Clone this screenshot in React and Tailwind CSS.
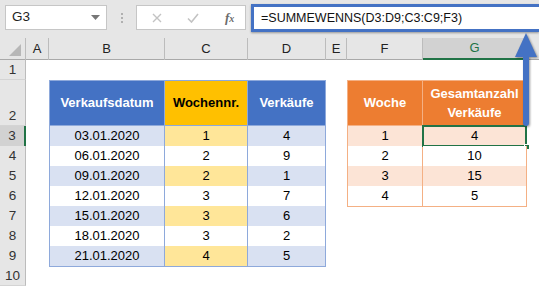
import React from "react";

const GRID = "grid grid-cols-[26px_23px_116px_83px_78px_21px_76px_104px_12px]";
const FONT = "font-['Liberation_Sans',Arial,sans-serif]";

const dates = ["03.01.2020", "06.01.2020", "09.01.2020", "12.01.2020", "15.01.2020", "18.01.2020", "21.01.2020"];
const weeks = [1, 2, 2, 3, 3, 3, 4];
const sales = [4, 9, 1, 7, 6, 2, 5];
const totals = [
  [1, 4],
  [2, 10],
  [3, 15],
  [4, 5],
];

function RowHead({ n, active }) {
  return (
    <div
      className={`flex items-end justify-center border-b border-[#d4d4d4] pb-[1px] text-[13.5px] leading-none text-[#333] ${
        active ? "border-r-2 border-r-[#217346] bg-[#d2d2d2]" : "border-r border-r-[#bcbcbc] bg-[#e6e6e6]"
      }`}
    >
      <span className="mb-[2px]">{n}</span>
    </div>
  );
}

function Cell({ className = "", children }) {
  return <div className={`flex items-center justify-center text-[13px] text-black ${className}`}>{children}</div>;
}

function FormulaBar() {
  return (
    <div className="flex h-[38px] items-start bg-[#e6e6e6] pl-[5px] pt-[5px]">
      <div className="flex h-[25px] w-[102px] items-center justify-between border border-[#c6c6c6] bg-white pl-[6px] pr-[6px]">
        <span className="text-[13.5px] text-[#222]">G3</span>
        <svg width="9" height="5" viewBox="0 0 9 5">
          <path d="M0 0h9L4.5 5z" fill="#777" />
        </svg>
      </div>
      <div className="ml-[14px] mt-[8px] flex flex-col gap-[2px]">
        <span className="h-[2px] w-[2px] bg-[#b0b0b0]" />
        <span className="h-[2px] w-[2px] bg-[#b0b0b0]" />
        <span className="h-[2px] w-[2px] bg-[#b0b0b0]" />
      </div>
      <div className="ml-[13px] flex h-[25px] w-[110px] items-center border border-[#c6c6c6] bg-white">
        <svg className="ml-[15px]" width="10" height="10" viewBox="0 0 10 10">
          <path d="M1 1l8 8M9 1l-8 8" stroke="#c3c3c3" strokeWidth="1.4" />
        </svg>
        <svg className="ml-[25px]" width="12" height="10" viewBox="0 0 12 10">
          <path d="M1 5.5l3.5 3.5L11 1" stroke="#c3c3c3" strokeWidth="1.6" fill="none" />
        </svg>
        <span className="ml-[26px] font-['Liberation_Serif',serif] text-[13px] font-bold italic text-[#6b6b6b]">
          f<span className="text-[10px]">x</span>
        </span>
      </div>
      <div className="ml-[5px] mt-[-1px] flex h-[28px] flex-1 items-center border-[3px] border-r-0 border-[#4472c4] bg-white pl-[7px] shadow-[0_1px_2px_rgba(0,0,0,0.35)]">
        <span className="text-[12.5px] text-[#111]">=SUMMEWENNS(D3:D9;C3:C9;F3)</span>
      </div>
    </div>
  );
}

function ColumnHeaders() {
  const cols = ["A", "B", "C", "D", "E", "F", "G"];
  return (
    <div className={`${GRID} h-[22px] border-b border-[#a9a9a9] bg-[#e6e6e6]`}>
      <div className="flex items-end justify-end border-r border-[#bcbcbc] pb-[4px] pr-[4px]">
        <svg width="12" height="12" viewBox="0 0 12 12">
          <path d="M12 0v12H0z" fill="#b7b7b7" />
        </svg>
      </div>
      {cols.map((c) => (
        <div
          key={c}
          className={`flex items-center justify-center border-r border-[#bcbcbc] text-[13px] ${
            c === "G" ? "border-b-2 border-b-[#217346] bg-[#d2d2d2] text-[#217346]" : "text-[#222]"
          }`}
        >
          {c}
        </div>
      ))}
      <div />
    </div>
  );
}

export default function App() {
  return (
    <div className={`relative h-[286px] w-[539px] overflow-hidden bg-white ${FONT}`}>
      <FormulaBar />
      <ColumnHeaders />

      {/* row 1 */}
      <div className={`${GRID} h-[20px]`}>
        <RowHead n={1} />
      </div>

      {/* row 2: headers */}
      <div className={`${GRID} h-[46px]`}>
        <RowHead n={2} />
        <div />
        <Cell className="border border-[#8ea9db] bg-[#4472c4] font-bold">
          <span className="text-white">Verkaufsdatum</span>
        </Cell>
        <Cell className="border-y border-r border-[#8ea9db] bg-[#ffc000] font-bold">Wochennr.</Cell>
        <Cell className="border-y border-r border-[#8ea9db] bg-[#4472c4] font-bold">
          <span className="text-white">Verkäufe</span>
        </Cell>
        <div />
        <Cell className="border border-[#f4b084] bg-[#ed7d31] font-bold">
          <span className="text-white">Woche</span>
        </Cell>
        <Cell className="border-y border-r border-[#f4b084] bg-[#ed7d31] font-bold">
          <span className="text-center leading-[19px] text-white">
            Gesamtanzahl
            <br />
            Verkäufe
          </span>
        </Cell>
        <div />
      </div>

      {dates.map((d, i) => {
        const odd = i % 2 === 0;
        const blue = odd ? "bg-[#d9e1f2]" : "bg-white";
        const yellow = odd ? "bg-[#ffe699]" : "bg-white";
        const t = totals[i];
        const orange = i % 2 === 0 ? "bg-[#fce4d6]" : "bg-white";
        return (
          <div key={d} className={`${GRID} h-[20px]`}>
            <RowHead n={i + 3} active={i === 0} />
            <div />
            <Cell className={`border-x border-b border-[#8ea9db] ${blue}`}>{d}</Cell>
            <Cell className={`border-r border-b border-[#8ea9db] ${yellow}`}>{weeks[i]}</Cell>
            <Cell className={`border-r border-b border-[#8ea9db] ${blue}`}>{sales[i]}</Cell>
            <div />
            {t ? (
              <>
                <Cell className={`border-x border-b border-[#f4b084] ${orange}`}>{t[0]}</Cell>
                <Cell className={`relative border-r border-b border-[#f4b084] ${orange}`}>
                  {t[1]}
                  {i === 0 && (
                    <>
                      <span className="absolute inset-x-[-1px] bottom-[-1px] top-[-1px] border-2 border-[#217346]" />
                      <span className="absolute bottom-[-4px] right-[-4px] h-[6px] w-[6px] border border-white bg-[#217346]" />
                    </>
                  )}
                </Cell>
              </>
            ) : (
              <>
                <div />
                <div />
              </>
            )}
            <div />
          </div>
        );
      })}

      {/* row 10 */}
      <div className={`${GRID} h-[20px]`}>
        <RowHead n={10} />
      </div>

      {/* pointer arrow */}
      <svg
        className="absolute left-[512px] top-[31px] drop-shadow-[1px_1px_1px_rgba(0,0,0,0.4)]"
        width="27"
        height="98"
        viewBox="0 0 27 98"
      >
        <path d="M14 2L25 26H3z" fill="#4472c4" />
        <path d="M11 25h6v67a3 3 0 0 1-6 0z" fill="#4472c4" />
      </svg>
    </div>
  );
}
